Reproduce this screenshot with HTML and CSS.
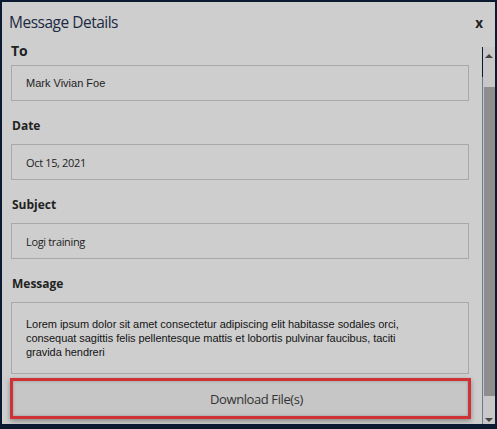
FILE: index.html
```html
<!DOCTYPE html>
<html>
<head>
<meta charset="utf-8">
<link rel="stylesheet" href="styles.css">
</head>
<body>
<div class="dialog">
  <div class="header">
    <div class="title">Message Details</div>
    <div class="close">x</div>
  </div>
  <div class="body">
    <div class="content">
      <div class="label label-to">To</div>
      <div class="field field-arial">Mark Vivian Foe</div>
      <div class="label">Date</div>
      <div class="field">Oct 15, 2021</div>
      <div class="label">Subject</div>
      <div class="field">Logi training</div>
      <div class="label">Message</div>
      <div class="field field-message">Lorem ipsum dolor sit amet consectetur adipiscing elit habitasse sodales orci, consequat sagittis felis pellentesque mattis et lobortis pulvinar faucibus, taciti gravida hendreri</div>
      <div class="download-wrap">
        <div class="download">Download File(s)</div>
      </div>
    </div>
    <div class="scrollbar">
      <div class="sb-edge"></div>
      <div class="sb-main">
        <div class="sb-up"><span class="arrow-up"></span></div>
        <div class="sb-track"><div class="sb-thumb"></div></div>
        <div class="sb-down"><span class="arrow-down"></span></div>
      </div>
    </div>
  </div>
</div>
</body>
</html>
```
FILE: styles.css
```css
html, body {
  margin: 0;
  padding: 0;
  background: #0b1a30;
  width: 497px;
  height: 429px;
  overflow: hidden;
}
.dialog {
  margin: 2px 2px 0 2px;
  width: 493px;
  height: 422px;
  background: #cecece;
  display: flex;
  flex-direction: column;
}
.header {
  height: 38px;
  box-sizing: border-box;
  display: flex;
  justify-content: space-between;
  align-items: flex-start;
  padding: 9px 12px 0 7px;
}
.title {
  font-family: "Open Sans", sans-serif;
  font-size: 15.5px;
  line-height: 22px;
  letter-spacing: -0.5px;
  color: #1b2a44;
}
.close {
  font-family: "Open Sans", sans-serif;
  font-weight: 700;
  font-size: 13.5px;
  line-height: 22px;
  padding-top: 1px;
  color: #222;
}
.body {
  flex: 1;
  display: flex;
  min-height: 0;
}
.content {
  flex: 1;
  padding: 2px 13px 0 9px;
  overflow: hidden;
}
.label {
  font-family: "Open Sans", sans-serif;
  font-weight: 700;
  font-size: 12px;
  line-height: 16px;
  color: #222;
  margin: 17px 0 10px 1px;
}
.label-to {
  font-size: 14px;
  line-height: 18px;
  margin: 0 0 5px 0;
}
.field {
  height: 36px;
  box-sizing: border-box;
  border: 1px solid #a8a8a8;
  padding: 0 14px;
  display: flex;
  align-items: center;
  font-family: "Open Sans", sans-serif;
  font-size: 11px;
  letter-spacing: -0.35px;
  color: #222;
}
.field-arial {
  font-family: "Liberation Sans", Arial, sans-serif;
  letter-spacing: 0;
}
.field-message {
  height: 72px;
  display: block;
  padding: 14px 46px 14px 14px;
  font-family: "Liberation Sans", Arial, sans-serif;
  font-size: 11px;
  line-height: 14px;
  letter-spacing: -0.05px;
  color: #141414;
}
.download-wrap {
  margin: 4px -2px 0 -1px;
  border: 3px solid #cf3234;
  box-shadow: 0 2px 5px rgba(0, 0, 0, 0.35);
}
.download {
  height: 35px;
  background: #c6c6c6;
  box-shadow: inset 0 0 3px rgba(0, 0, 0, 0.25);
  display: flex;
  align-items: center;
  justify-content: center;
  padding-left: 32px;
  font-family: "Open Sans", sans-serif;
  font-size: 13px;
  letter-spacing: -0.4px;
  color: #333;
}
.scrollbar {
  width: 13px;
  margin-top: 7px;
  display: flex;
}
.sb-edge {
  width: 1px;
  background: linear-gradient(#0b1a33 0, #0b1a33 30px, #6b7a93 30px);
}
.sb-main {
  flex: 1;
  display: flex;
  flex-direction: column;
  background: #c8c8c8;
}
.sb-up {
  height: 17px;
  display: flex;
  justify-content: center;
  padding-top: 7px;
  box-sizing: border-box;
}
.sb-track {
  flex: 1;
  padding: 23px 0 0 1px;
}
.sb-thumb {
  height: 309px;
  background: #8e8e8e;
}
.sb-down {
  height: 12px;
  display: flex;
  justify-content: center;
  padding-top: 6px;
  box-sizing: border-box;
}
.arrow-up {
  width: 0;
  height: 0;
  border-left: 4px solid transparent;
  border-right: 4px solid transparent;
  border-bottom: 4px solid #444;
}
.arrow-down {
  width: 0;
  height: 0;
  border-left: 4px solid transparent;
  border-right: 4px solid transparent;
  border-top: 4px solid #444;
}
```
